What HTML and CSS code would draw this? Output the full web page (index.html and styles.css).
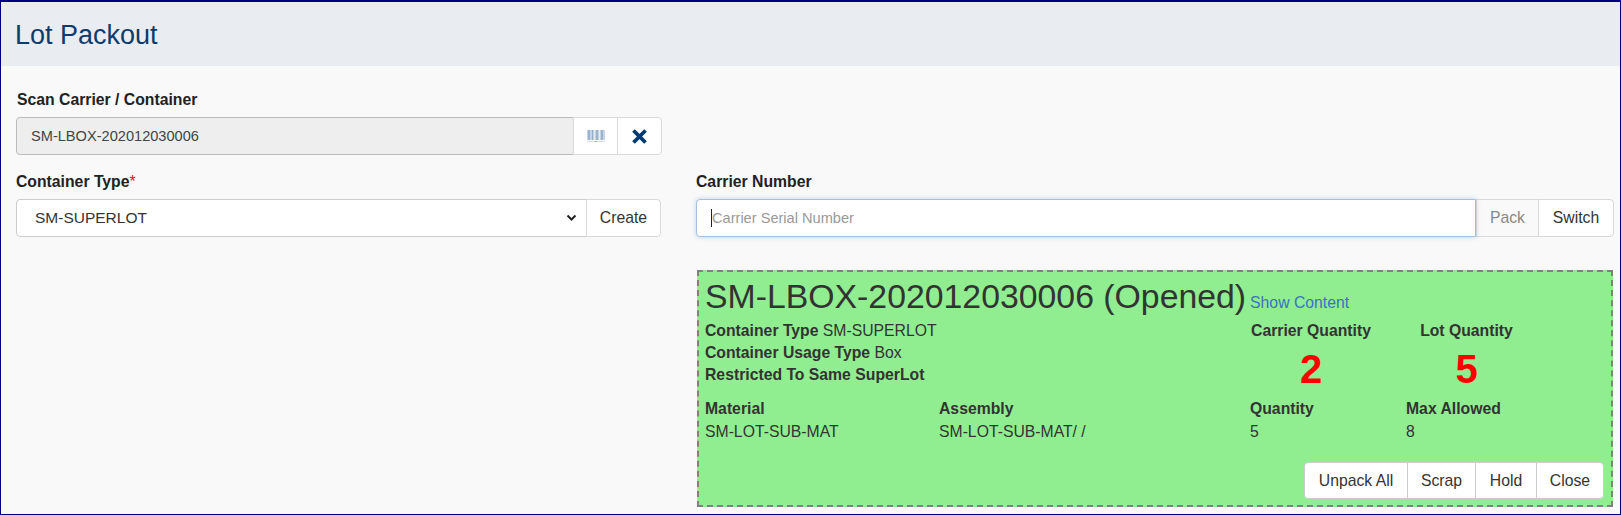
FILE: index.html
```html
<!DOCTYPE html>
<html lang="en">
<head>
    <meta charset="UTF-8">
    <title>Lot Packout</title>
    <link rel="stylesheet" href="styles.css">
</head>
<body>
    <div class="frame">
        <div class="page-header">
            <h1>Lot Packout</h1>
        </div>
        <div class="content">
            <div class="left-col">
                <label class="field-label scan-label">Scan Carrier / Container</label>
                <div class="input-group scan-group">
                    <input class="form-input readonly" type="text" value="SM-LBOX-202012030006" readonly>
                    <button class="addon barcode-btn" type="button">
                        <svg width="18" height="13" viewBox="0 0 18 13">
                            <rect x="0" y="0" width="18" height="10" fill="#c6d3e2"/>
                            <rect x="1" y="0" width="2" height="10" fill="#9db4cd"/>
                            <rect x="5" y="0" width="1" height="10" fill="#94adc9"/>
                            <rect x="7" y="0" width="1" height="10" fill="#e6ecf2"/>
                            <rect x="9" y="0" width="2" height="10" fill="#9db4cd"/>
                            <rect x="12" y="0" width="1" height="10" fill="#e6ecf2"/>
                            <rect x="14" y="0" width="2" height="10" fill="#9db4cd"/>
                            <rect x="0" y="11" width="18" height="1" fill="#d3dde8"/>
                            <rect x="8" y="11" width="2" height="1" fill="#94adc9"/>
                        </svg>
                    </button>
                    <button class="addon clear-btn" type="button">
                        <svg width="17" height="17" viewBox="0 0 17 17">
                            <path d="M2.5 2.5 L14.5 14.5 M14.5 2.5 L2.5 14.5" stroke="#003a70" stroke-width="3.8" fill="none"/>
                        </svg>
                    </button>
                </div>
                <label class="field-label">Container Type<span class="required">*</span></label>
                <div class="input-group">
                    <div class="select-box">
                        <span>SM-SUPERLOT</span>
                        <svg width="11" height="8" viewBox="0 0 11 8">
                            <path d="M1.5 1.5 L5.5 5.5 L9.5 1.5" stroke="#222" stroke-width="2" fill="none"/>
                        </svg>
                    </div>
                    <button class="addon create-btn" type="button">Create</button>
                </div>
            </div>
            <div class="right-col">
                <label class="field-label">Carrier Number</label>
                <div class="input-group">
                    <div class="carrier-input">
                        <span class="caret"></span>
                        <input class="form-input focused" type="text" placeholder="Carrier Serial Number">
                    </div>
                    <button class="addon pack-btn" type="button">Pack</button>
                    <button class="addon switch-btn" type="button">Switch</button>
                </div>
                <div class="carrier-card">
                    <div class="card-title">
                        <span class="carrier-name">SM-LBOX-202012030006 (Opened)</span>
                        <a class="show-link" href="#">Show Content</a>
                    </div>
                    <div class="summary">
                        <div class="summary-info">
                            <div><b>Container Type</b> SM-SUPERLOT</div>
                            <div><b>Container Usage Type</b> Box</div>
                            <div><b>Restricted To Same SuperLot</b></div>
                        </div>
                        <div class="qty qty-carrier">
                            <b>Carrier Quantity</b>
                            <div class="qty-value">2</div>
                        </div>
                        <div class="qty qty-lot">
                            <b>Lot Quantity</b>
                            <div class="qty-value">5</div>
                        </div>
                    </div>
                    <div class="details">
                        <div><b>Material</b><div>SM-LOT-SUB-MAT</div></div>
                        <div><b>Assembly</b><div>SM-LOT-SUB-MAT/ /</div></div>
                        <div><b>Quantity</b><div>5</div></div>
                        <div><b>Max Allowed</b><div>8</div></div>
                    </div>
                    <div class="card-actions">
                        <button class="action unpack" type="button">Unpack All</button>
                        <button class="action scrap" type="button">Scrap</button>
                        <button class="action hold" type="button">Hold</button>
                        <button class="action close" type="button">Close</button>
                    </div>
                </div>
            </div>
        </div>
    </div>
</body>
</html>
```

FILE: styles.css
```css
* {
    box-sizing: border-box;
}
body {
    margin: 0;
    font-family: "Liberation Sans", Arial, sans-serif;
    font-size: 15.75px;
    color: #333;
}
.frame {
    height: 515px;
    border: 1px solid #000080;
    border-top-width: 2px;
    background-color: #f9f9f9;
    overflow: hidden;
}
.page-header {
    height: 64px;
    padding: 2px 0 0 14px;
    background-color: #e9ecf1;
    display: flex;
    align-items: center;
}
.page-header h1 {
    margin: 0;
    font-size: 27px;
    font-weight: normal;
    color: #0c3c6e;
}
.content {
    display: flex;
    padding: 0 6px 0 15px;
}
.left-col {
    width: 645px;
    margin-right: 35px;
}
.right-col {
    flex: 1;
    padding-top: 104px;
}
.field-label {
    display: block;
    height: 24px;
    margin-bottom: 5px;
    font-weight: bold;
    font-size: 15.75px;
    line-height: 24px;
    color: #222;
}
.scan-label {
    margin: 22px 0 5px 1px;
}
.required {
    color: #e01030;
    font-weight: normal;
}
.input-group {
    display: flex;
    height: 38px;
}
.scan-group {
    margin-right: -1px;
    margin-bottom: 15px;
}
.form-input {
    flex: 1;
    width: 100%;
    height: 100%;
    padding: 0 14px;
    border: 1px solid #ccc;
    border-radius: 4px 0 0 4px;
    font-family: inherit;
    font-size: 14.6px;
    color: #444;
    outline: none;
}
.form-input.readonly {
    background-color: #eee;
    border-color: #bbb;
}
.form-input.focused {
    border-color: #a3c0e0;
    box-shadow: 0 0 5px rgba(100, 150, 210, 0.4);
    padding-left: 15px;
}
.form-input::placeholder {
    color: #999;
    opacity: 1;
}
.addon {
    height: 100%;
    margin-left: -1px;
    padding: 0;
    border: 1px solid #d9d9d9;
    background-color: #fff;
    font-family: inherit;
    font-size: 15.75px;
    color: #333;
    display: flex;
    align-items: center;
    justify-content: center;
}
.addon:last-child {
    border-radius: 0 4px 4px 0;
}
.barcode-btn {
    width: 45px;
}
.clear-btn {
    width: 45px;
}
.create-btn {
    width: 75px;
}
.select-box {
    flex: 1;
    height: 100%;
    padding: 0 9px 0 18px;
    border: 1px solid #ccc;
    border-radius: 4px 0 0 4px;
    background-color: #fff;
    font-size: 15.5px;
    color: #333;
    display: flex;
    align-items: center;
    justify-content: space-between;
}
.carrier-input {
    flex: 1;
    position: relative;
}
.caret {
    position: absolute;
    left: 15px;
    top: 10px;
    width: 1px;
    height: 18px;
    background-color: #222;
}
.pack-btn {
    width: 63px;
    margin-left: 0;
    background-color: #f9f9f9;
    color: #888;
}
.switch-btn {
    width: 76px;
}
.carrier-card {
    height: 237px;
    margin: 33px 1px 0 1px;
    padding: 4px 7px 0 6px;
    border: 2px dashed #808080;
    background-color: #90ee90;
    display: flex;
    flex-direction: column;
}
.card-title {
    display: flex;
    align-items: baseline;
    height: 44px;
}
.carrier-name {
    font-size: 33.8px;
    line-height: 40px;
    margin-right: 4px;
}
.show-link {
    color: #3a72c4;
    text-decoration: none;
}
.summary {
    display: flex;
    line-height: 22px;
    height: 77px;
}
.summary-info {
    width: 546px;
}
.qty {
    text-align: center;
}
.qty-carrier {
    width: 120px;
    margin-right: 49px;
}
.qty-lot {
    width: 93px;
}
.qty-value {
    margin-top: 4px;
    font-size: 40px;
    font-weight: bold;
    color: #ff0000;
    line-height: 46px;
}
.details {
    display: grid;
    grid-template-columns: 234px 311px 156px 1fr;
    line-height: 23px;
}
.card-actions {
    display: flex;
    align-self: flex-end;
    height: 37px;
    margin-top: auto;
    margin-bottom: 6px;
}
.action {
    height: 100%;
    padding: 0;
    margin-left: -1px;
    border: 1px solid #ccc;
    background-color: #fff;
    font-family: inherit;
    font-size: 15.75px;
    color: #333;
}
.action:first-child {
    border-radius: 4px 0 0 4px;
}
.action:last-child {
    border-radius: 0 4px 4px 0;
}
.unpack { width: 104px; }
.scrap { width: 69px; }
.hold { width: 62px; }
.close { width: 68px; }
```
